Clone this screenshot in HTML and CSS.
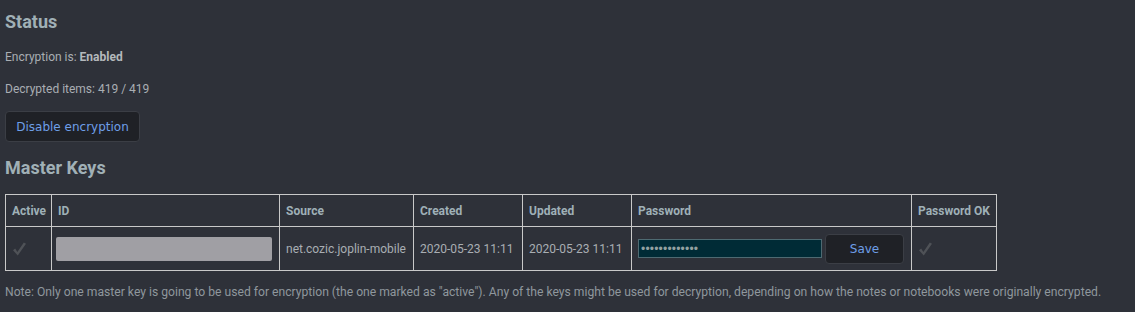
FILE: index.html
```html
<!DOCTYPE html>
<html lang="en">
<head>
    <meta charset="UTF-8">
    <title>Encryption</title>
    <link rel="stylesheet" href="styles.css">
</head>
<body>

<div class="page">
    <h2 class="section-title">Status</h2>
    <p class="status-line">Encryption is: <b>Enabled</b></p>
    <p class="status-line">Decrypted items: 419 / 419</p>
    <button class="btn btn-disable">Disable encryption</button>

    <h2 class="section-title keys-title">Master Keys</h2>
    <table class="keys-table">
        <tr>
            <th class="col-active">Active</th>
            <th class="col-id">ID</th>
            <th class="col-source">Source</th>
            <th class="col-created">Created</th>
            <th class="col-updated">Updated</th>
            <th class="col-password">Password</th>
            <th class="col-ok">Password OK</th>
        </tr>
        <tr>
            <td><svg class="check" viewBox="0 0 15 16"><path d="M0 10 L2.5 8 L5 12 L12.5 1 L15 2.5 L5.5 16 Z"/></svg></td>
            <td class="id-cell"><div class="redacted"></div></td>
            <td>net.cozic.joplin-mobile</td>
            <td>2020-05-23 11:11</td>
            <td>2020-05-23 11:11</td>
            <td>
                <div class="pw-cell">
                    <input type="password" class="pw-input" value="aaaaaaaaaaaaa">
                    <button class="btn btn-save">Save</button>
                </div>
            </td>
            <td><svg class="check" viewBox="0 0 15 16"><path d="M0 10 L2.5 8 L5 12 L12.5 1 L15 2.5 L5.5 16 Z"/></svg></td>
        </tr>
    </table>

    <p class="note">Note: Only one master key is going to be used for encryption (the one marked as "active"). Any of the keys might be used for decryption, depending on how the notes or notebooks were originally encrypted.</p>
</div>

</body>
</html>
```

FILE: styles.css
```css
body {
    margin: 0;
    background-color: #2e3139;
    font-family: Roboto, "Liberation Sans", sans-serif;
    color: #a9aeb3;
}

.page {
    padding: 0 5px;
    display: flex;
    flex-direction: column;
    align-items: flex-start;
}

.section-title {
    font-size: 18px;
    line-height: 20px;
    font-weight: bold;
    color: #a0b0b6;
    margin: 12px 0 0 0;
}

.keys-title {
    margin-top: 16px;
}

.status-line {
    font-size: 12px;
    line-height: 15px;
    margin: 18px 0 0 0;
}

.status-line + .status-line {
    margin-top: 17px;
}

.status-line b {
    color: #b4b8bc;
}

.btn {
    font-family: "DejaVu Sans", sans-serif;
    background-color: #1f2126;
    border: 1px solid #3b3e45;
    border-radius: 4px;
    color: #6e9fe8;
    cursor: pointer;
}

.btn-disable {
    margin-top: 14px;
    height: 31px;
    width: 135px;
    font-size: 12px;
    padding: 0;
}

.keys-table {
    margin-top: 16px;
    border-collapse: collapse;
    table-layout: fixed;
    width: 991px;
    font-size: 12px;
}

.keys-table th, .keys-table td {
    box-sizing: border-box;
    border: 1px solid #c9c9c9;
    text-align: left;
    padding: 0 6px;
    white-space: nowrap;
    overflow: hidden;
}

.keys-table th {
    height: 32px;
    color: #9fb0b7;
    font-weight: bold;
}

.keys-table td {
    height: 44px;
}

.col-active { width: 46px; }
.col-id { width: 228px; }
.col-source { width: 134px; }
.col-created { width: 109px; }
.col-updated { width: 109px; }
.col-password { width: 280px; }
.col-ok { width: 85px; }

.keys-table .id-cell {
    padding-left: 4px;
}

.check {
    display: block;
    width: 13px;
    height: 15px;
    margin-left: 1px;
    fill: #4f5257;
}

.redacted {
    width: 216px;
    height: 24px;
    background-color: #a09fa4;
    border-radius: 2px;
}

.pw-cell {
    display: flex;
    align-items: center;
    gap: 3px;
}

.pw-input {
    width: 184px;
    height: 19px;
    box-sizing: border-box;
    margin: 0;
    padding: 0 2px;
    background-color: #002b36;
    border: 1px solid #4e6a72;
    color: #93a1a1;
    font-size: 12px;
    letter-spacing: 0.2px;
}

.btn-save {
    width: 79px;
    height: 30px;
    font-size: 12px;
    padding: 0;
}

.note {
    font-size: 12.15px;
    line-height: 15px;
    margin: 14px 0 0 0;
    color: #8f979d;
}
```
